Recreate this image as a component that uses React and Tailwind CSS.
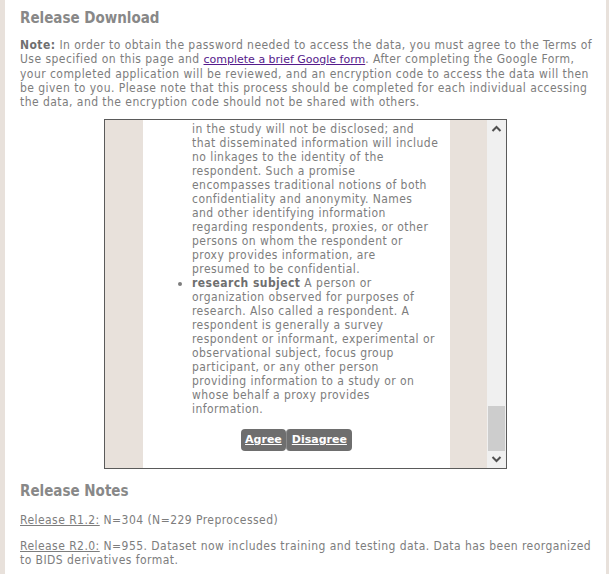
import React from 'react';

const font = { fontFamily: '"DejaVu Sans Condensed", "Liberation Sans", sans-serif' };
const verdana = { fontFamily: '"DejaVu Sans", sans-serif' };

const topLines = [
    'in the study will not be disclosed; and',
    'that disseminated information will include',
    'no linkages to the identity of the',
    'respondent. Such a promise',
    'encompasses traditional notions of both',
    'confidentiality and anonymity. Names',
    'and other identifying information',
    'regarding respondents, proxies, or other',
    'persons on whom the respondent or',
    'proxy provides information, are',
    'presumed to be confidential.',
];

const subjectLines = [
    'organization observed for purposes of',
    'research. Also called a respondent. A',
    'respondent is generally a survey',
    'respondent or informant, experimental or',
    'observational subject, focus group',
    'participant, or any other person',
    'providing information to a study or on',
    'whose behalf a proxy provides',
    'information.',
];

function Scrollbar() {
    return (
        <div className="w-[19px] bg-[#f0f0f0] flex flex-col items-center">
            <svg width="19" height="17" viewBox="0 0 19 17" className="shrink-0">
                <path d="M5.5 11 L9.5 7 L13.5 11" stroke="#505050" strokeWidth="2" fill="none" />
            </svg>
            <div className="flex-1" />
            <div className="w-[17px] h-[45px] bg-[#cdcdcd]" />
            <svg width="19" height="17" viewBox="0 0 19 17" className="shrink-0">
                <path d="M5.5 6 L9.5 10 L13.5 6" stroke="#505050" strokeWidth="2" fill="none" />
            </svg>
        </div>
    );
}

function TermsBox() {
    return (
        <div className="ml-[84px] w-[403px] h-[350px] border border-[#5a5a5a] flex overflow-hidden">
            <div className="w-[38px] bg-[#e8e1db]" />
            <div className="w-[307px] bg-white text-[12px] tracking-[0.45px] leading-[14px] text-[#7d7d7d] pt-[2px]">
                <div className="pl-[49px] whitespace-nowrap">
                    {topLines.map(line => <div key={line}>{line}</div>)}
                </div>
                <ul className="pl-[49px] list-disc whitespace-nowrap">
                    <li>
                        <b className="text-[#6f6f6f]">research subject</b> A person or
                        {subjectLines.map(line => <div key={line}>{line}</div>)}
                    </li>
                </ul>
                <div className="flex justify-center mt-[13px]">
                    <button className="bg-[#6e6e6e] text-white text-[11px] tracking-normal font-bold underline rounded-[4px] px-[4px] h-[22px]" style={verdana}>Agree</button>
                    <button className="bg-[#6e6e6e] text-white text-[11px] tracking-normal font-bold underline rounded-[4px] px-[5px] h-[22px] border-l border-[#8a8a8a]" style={verdana}>Disagree</button>
                </div>
            </div>
            <div className="w-[37px] bg-[#e8e1db]" />
            <Scrollbar />
        </div>
    );
}

export default function App() {
    return (
        <div className="w-[609px] h-[574px] bg-white border-l-[5px] border-r-[3px] border-[#e8e1db] text-[#7d7d7d] overflow-hidden" style={font}>
            <div className="pl-[15px] pr-[10px] pt-[9px]">
                <h2 className="text-[15px] font-bold text-[#888888] leading-[18px]">Release Download</h2>
                <p className="mt-[11px] text-[12px] tracking-[0.45px] leading-[14px]">
                    <b className="text-[#6f6f6f]">Note:</b> In order to obtain the password needed to access the data, you must agree to the Terms of Use specified on this page and{' '}
                    <a href="#" className="text-[#551a8b] underline text-[11px] tracking-normal" style={verdana}>complete a brief Google form</a>. After completing the Google Form, your completed application will be reviewed, and an encryption code to access the data will then be given to you. Please note that this process should be completed for each individual accessing the data, and the encryption code should not be shared with others.
                </p>
                <div className="mt-[10px]">
                    <TermsBox />
                </div>
                <h2 className="mt-[13px] text-[15px] font-bold text-[#888888] leading-[18px]">Release Notes</h2>
                <p className="mt-[13px] text-[12px] tracking-[0.45px] leading-[14px]">
                    <a href="#" className="underline text-[#7d7d7d]">Release R1.2:</a> N=304 (N=229 Preprocessed)
                </p>
                <p className="mt-[12px] text-[12px] tracking-[0.45px] leading-[14px]">
                    <a href="#" className="underline text-[#7d7d7d]">Release R2.0:</a> N=955. Dataset now includes training and testing data. Data has been reorganized to BIDS derivatives format.
                </p>
            </div>
        </div>
    );
}
